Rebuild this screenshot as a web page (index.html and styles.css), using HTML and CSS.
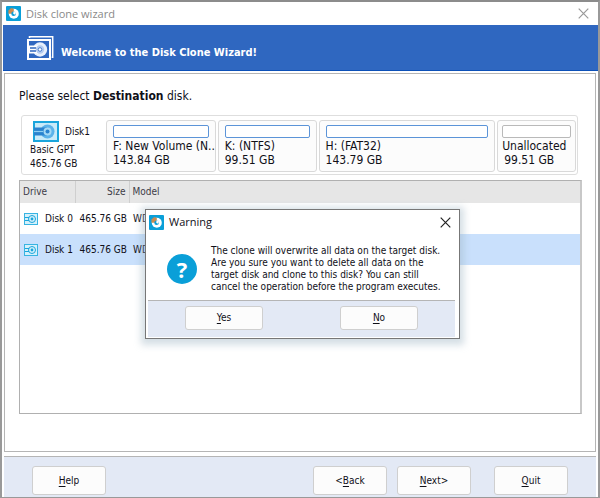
FILE: index.html
```html
<!DOCTYPE html>
<html lang="en">
<head>
  <meta charset="UTF-8" />
  <meta name="viewport" content="width=device-width, initial-scale=1.0" />
  <title>Disk clone wizard</title>
  <link rel="stylesheet" href="styles.css">
</head>
<body>
  <svg width="0" height="0" class="symbols" aria-hidden="true">
    <symbol id="logo" viewBox="0 0 15 15">
      <rect width="15" height="15" rx="1" fill="#0a9fd8" />
      <circle cx="7.8" cy="7.8" r="5" fill="#fff" />
      <path d="M7.8 7.8V3L5.2 2 2.4 4.6v3.2z" fill="#c98b52" />
      <circle cx="7.6" cy="7.8" r="2.3" fill="#0a9fd8" />
      <path d="M7.6 5.2l2.6 1.4-1.2 2.2-1.8-1z" fill="#fff" />
    </symbol>
    <symbol id="disk" viewBox="0 0 26 21">
      <rect x="1" y="1" width="24" height="19" fill="#c9ebf9" stroke="#1aa5dc" stroke-width="2" />
      <circle cx="14.5" cy="10.5" r="7" fill="#5cb3ea" />
      <path d="M1 6.5h13v8H1z" fill="#2a83cf" />
      <path d="M1 10.5h9" stroke="#8fd0f3" stroke-width="1.2" />
      <circle cx="14.5" cy="10.5" r="4" fill="#a5d9f5" />
      <circle cx="14.5" cy="10.5" r="2" fill="#2a83cf" />
    </symbol>
    <symbol id="drive" viewBox="0 0 14 12">
      <rect x=".5" y=".5" width="13" height="11" fill="#d5f1fb" stroke="#38b4e2" />
      <circle cx="8" cy="6" r="3.5" fill="none" stroke="#1aa5dc" />
      <circle cx="8" cy="6" r="1.4" fill="#1aa5dc" />
      <path d="M1 4.5h4M1 7.5h4" stroke="#1aa5dc" />
    </symbol>
    <symbol id="close" viewBox="0 0 11 11">
      <path d="M.7.7l9.6 9.6M10.3.7L.7 10.3" fill="none" stroke="currentColor" stroke-width="1.2" />
    </symbol>
  </svg>

  <div class="window">
    <header class="titlebar">
      <svg class="logo"><use href="#logo" /></svg>
      <span class="title">Disk clone wizard</span>
      <button type="button" class="close" aria-label="Close"><svg><use href="#close" /></svg></button>
    </header>

    <div class="banner">
      <svg class="banner-icon" viewBox="0 0 27 24">
        <path d="M2.5 2V.8h23.2v20.4h-1" fill="none" stroke="#fff" stroke-width="1.5" />
        <rect x="1" y="4" width="22" height="19" fill="#2f67c0" stroke="#fff" stroke-width="2" />
        <circle cx="13" cy="13.5" r="7.2" fill="#e6effc" />
        <path d="M2 9.5h9v8H2z" fill="#fff" />
        <path d="M3 12h6M3 15h6" stroke="#2f67c0" stroke-width="1.3" />
        <circle cx="13" cy="13.5" r="4.2" fill="#b4cbef" />
        <circle cx="13" cy="13.5" r="1.8" fill="#fff" stroke="#4a7fd0" />
      </svg>
      <h1>Welcome to the Disk Clone Wizard!</h1>
    </div>

    <main class="content">
      <p class="prompt">Please select <b>Destination</b> disk.</p>

      <section class="map">
        <div class="map-disk">
          <div class="map-name"><svg><use href="#disk" /></svg>Disk1</div>
          <div>Basic GPT</div>
          <div>465.76 GB</div>
        </div>
        <div class="partition"><div class="bar"></div><div>F: New Volume (N..</div><div>143.84 GB</div></div>
        <div class="partition"><div class="bar"></div><div>K: (NTFS)</div><div>99.51 GB</div></div>
        <div class="partition"><div class="bar"></div><div>H: (FAT32)</div><div>143.79 GB</div></div>
        <div class="partition free"><div class="bar"></div><div>Unallocated</div><div class="free-size">99.51 GB</div></div>
      </section>

      <div class="drives">
        <table>
          <thead>
            <tr><th class="col-drive">Drive</th><th class="col-size">Size</th><th>Model</th></tr>
          </thead>
          <tbody>
            <tr><td><span class="drive"><svg><use href="#drive" /></svg>Disk 0</span></td><td class="size">465.76 GB</td><td>WD</td></tr>
            <tr class="selected"><td><span class="drive"><svg><use href="#drive" /></svg>Disk 1</span></td><td class="size">465.76 GB</td><td>WD</td></tr>
          </tbody>
        </table>
      </div>
    </main>

    <footer class="actions">
      <button type="button" class="help"><u>H</u>elp</button>
      <button type="button">&lt;<u>B</u>ack</button>
      <button type="button"><u>N</u>ext&gt;</button>
      <button type="button" class="quit"><u>Q</u>uit</button>
    </footer>
  </div>

  <div class="dialog" role="dialog" aria-labelledby="dialog-title">
    <div class="titlebar">
      <svg class="logo"><use href="#logo" /></svg>
      <span class="title" id="dialog-title">Warning</span>
      <button type="button" class="close" aria-label="Close warning"><svg><use href="#close" /></svg></button>
    </div>
    <div class="message">
      <span class="question">?</span>
      <p>The clone will overwrite all data on the target disk.<br>Are you sure you want to delete all data on the<br>target disk and clone to this disk? You can still<br>cancel the operation before the program executes.</p>
    </div>
    <div class="dialog-actions">
      <button type="button"><u>Y</u>es</button>
      <button type="button"><u>N</u>o</button>
    </div>
  </div>
</body>
</html>
```
FILE: styles.css
```css
* { box-sizing: border-box; }
body {
  margin: 0;
  height: 100vh;
  font: 10px/14px "DejaVu Sans Condensed", "DejaVu Sans", sans-serif;
  color: #101018;
  background: #fff;
}
p, h1 { margin: 0; }
.symbols { position: absolute; }

.window {
  display: flex;
  flex-direction: column;
  height: 100%;
  border: 2px solid #999;
  border-top-color: #8c8c8c;
  border-bottom-width: 1px;
}

.titlebar { display: flex; align-items: center; flex: none; height: 23px; padding: 0 9px 0 4px; }
.logo { width: 15px; height: 15px; margin-right: 5px; }
.title { flex: 1; font: 11px/16px "Open Sans", "Noto Sans", sans-serif; }
.window > .titlebar .title { color: #8a8a8a; }
.close { display: flex; padding: 0; border: 0; background: none; color: #222; }
.close svg { width: 11px; height: 11px; }
.window > .titlebar .close { color: #999; }

.banner {
  display: flex;
  align-items: center;
  gap: 7px;
  flex: none;
  height: 46px;
  margin-left: 1px;
  padding-left: 24px;
  background: #2f67c0;
  border-bottom: 1px solid #0c50b8;
}
.banner-icon { width: 27px; height: 24px; }
.banner h1 { padding-top: 10px; font-size: 11px; line-height: 16px; color: #fff; }

.content {
  display: flex;
  flex-direction: column;
  flex: 1;
  margin: 2px 2px 4px;
  padding: 14px 13px 37px 14px;
  border: 1px solid #b5b5b5;
}
.prompt { font-size: 12px; line-height: 16px; }

.map {
  display: grid;
  grid-template-columns: 81px 110fr 99fr 177fr 79fr;
  gap: 2px;
  margin: 11px 4px 5px 2px;
  padding: 4px 1px;
  height: 60px;
  border: 1px solid #dedede;
  border-radius: 3px;
}
.map-disk { padding-left: 7px; }
.map-name { display: flex; align-items: center; gap: 6px; height: 23px; margin-left: 3px; }
.map-name svg { width: 26px; height: 21px; }
.partition {
  min-width: 0;
  padding: 4px 6px;
  font-size: 12px;
  line-height: 14px;
  white-space: nowrap;
  background: #fcfcfc;
  border: 1px solid #d9d9d9;
  border-radius: 3px;
}
.bar { height: 13px; margin-bottom: 1px; border: 1px solid #5c94d8; border-radius: 2px; background: #fff; }
.free { padding: 4px; }
.free .bar { border-color: #b9b9b9; }
.free-size { padding-left: 2px; }

.drives { flex: 1; border: 1px solid #b0b0b0; border-right: 2px solid #c8c8c8; }
table { width: 100%; border-collapse: collapse; table-layout: fixed; }
th { height: 22px; padding: 0 3px; font-weight: normal; text-align: left; color: #3c3c46; background: #e6e6e6; border-right: 1px solid #cfcfcf; }
th:last-child { border-right: 0; }
.col-drive { width: 55px; }
.col-size { width: 54px; text-align: right; }
td { height: 31px; padding: 0 4px; white-space: nowrap; }
.size { padding: 0 2px; text-align: right; }
.drive { display: flex; align-items: center; gap: 7px; }
.drive svg { width: 14px; height: 12px; flex: none; }
.selected { background: #c9e0fc; }

.actions {
  display: flex;
  gap: 10px;
  flex: none;
  height: 41px;
  margin: 0 2px;
  padding: 9px 28px 2px;
  background: #e3e9f5;
  border-top: 1px solid #b5b5b5;
}
.actions button, .dialog-actions button {
  width: 74px;
  padding: 0;
  font: inherit;
  color: inherit;
  background: #fcfcfc;
  border: 1px solid #cfcfcf;
  border-radius: 3px;
}
.help { margin-right: auto; }
.actions .quit { margin-left: 13px; }
u { text-underline-offset: 2px; }

.dialog {
  position: absolute;
  top: 209px;
  left: 145px;
  width: 315px;
  background: #fff;
  border: 1px solid #777;
  box-shadow: 0 2px 7px 4px rgba(150, 175, 190, .4);
}
.dialog .titlebar { height: 24px; padding: 0 8px 0 3px; }
.message { display: flex; align-items: center; gap: 14px; height: 66px; padding: 3px 0 0 21px; white-space: nowrap; }
.message p { line-height: 12px; }
.question {
  flex: none;
  width: 30px;
  height: 30px;
  border-radius: 50%;
  font: bold 22px/30px "Open Sans", sans-serif;
  text-align: center;
  color: #fff;
  background: #0a9fd8;
}
.dialog-actions {
  display: flex;
  justify-content: space-between;
  margin: 0 4px 1px 2px;
  padding: 5px 37px 7px;
  background: #e3e9f5;
  border-top: 1px solid #b5b5b5;
}
.dialog-actions button { width: 78px; height: 24px; }
```
